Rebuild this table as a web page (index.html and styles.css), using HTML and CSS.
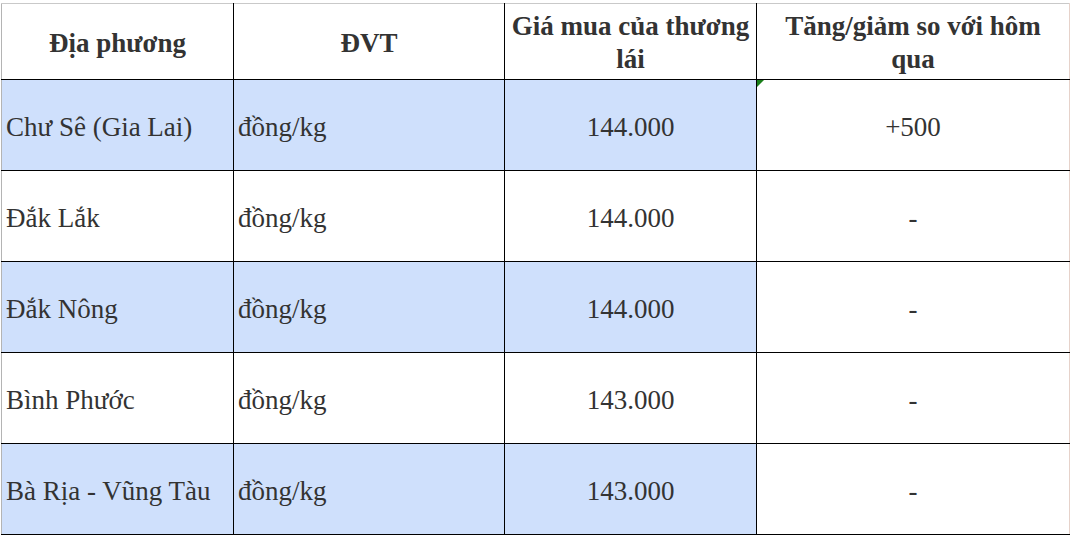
FILE: index.html
```html
<!DOCTYPE html>
<html lang="vi">
<head>
<meta charset="utf-8">
<title>Giá cà phê</title>
<link rel="stylesheet" href="styles.css">
</head>
<body>
<div class="sheet">
<table class="prices">
  <colgroup>
    <col class="c1"><col class="c2"><col class="c3"><col class="c4">
  </colgroup>
  <thead>
    <tr>
      <th>Địa phương</th>
      <th>ĐVT</th>
      <th>Giá mua của thương lái</th>
      <th>Tăng/giảm so với hôm qua</th>
    </tr>
  </thead>
  <tbody>
    <tr class="hl">
      <td class="left">Chư Sê (Gia Lai)</td>
      <td class="left">đồng/kg</td>
      <td class="mid">144.000</td>
      <td class="mid last mark">+500</td>
    </tr>
    <tr>
      <td class="left">Đắk Lắk</td>
      <td class="left">đồng/kg</td>
      <td class="mid">144.000</td>
      <td class="mid last">-</td>
    </tr>
    <tr class="hl">
      <td class="left">Đắk Nông</td>
      <td class="left">đồng/kg</td>
      <td class="mid">144.000</td>
      <td class="mid last">-</td>
    </tr>
    <tr>
      <td class="left">Bình Phước</td>
      <td class="left">đồng/kg</td>
      <td class="mid">143.000</td>
      <td class="mid last">-</td>
    </tr>
    <tr class="hl">
      <td class="left">Bà Rịa - Vũng Tàu</td>
      <td class="left">đồng/kg</td>
      <td class="mid">143.000</td>
      <td class="mid last">-</td>
    </tr>
  </tbody>
</table>
</div>
</body>
</html>
```
FILE: styles.css
```css
html, body {
  margin: 0;
  padding: 0;
  background: #ffffff;
}
body {
  font-family: "Liberation Serif", "Times New Roman", serif;
  color: #333333;
}
.sheet {
  padding-top: 3px;
  padding-left: 1px;
}
.prices {
  border-collapse: collapse;
  table-layout: fixed;
  width: 1068px;
}
.c1 { width: 232px; }
.c2 { width: 271px; }
.c3 { width: 252px; }
.c4 { width: 313px; }
.prices th,
.prices td {
  font-family: "Liberation Serif", "Times New Roman", serif;
  border: 1px solid #000000;
  vertical-align: middle;
  font-size: 27px;
  color: #333333;
}
.prices th {
  height: 72px;
  font-weight: bold;
  text-align: center;
  line-height: 33px;
  padding: 3px 6px 0 6px;
  border-top: 1px solid #c9c9c9;
}
.prices td {
  height: 86px;
  padding: 4px 4px 0 4px;
}
.prices tr > :first-child {
  border-left: 1px solid #b4b4b4;
}
.prices tr > :last-child {
  border-right: 1px solid #e6d2ca;
}
.prices .left { text-align: left; }
.prices .mid { text-align: center; }
.prices tr.hl td:not(.last) {
  background: #cfe0fc;
}
.prices .mark {
  position: relative;
}
.prices .mark::before {
  content: "";
  position: absolute;
  top: 0;
  left: 0;
  border-top: 7px solid #1a7f1a;
  border-right: 7px solid transparent;
}
```
